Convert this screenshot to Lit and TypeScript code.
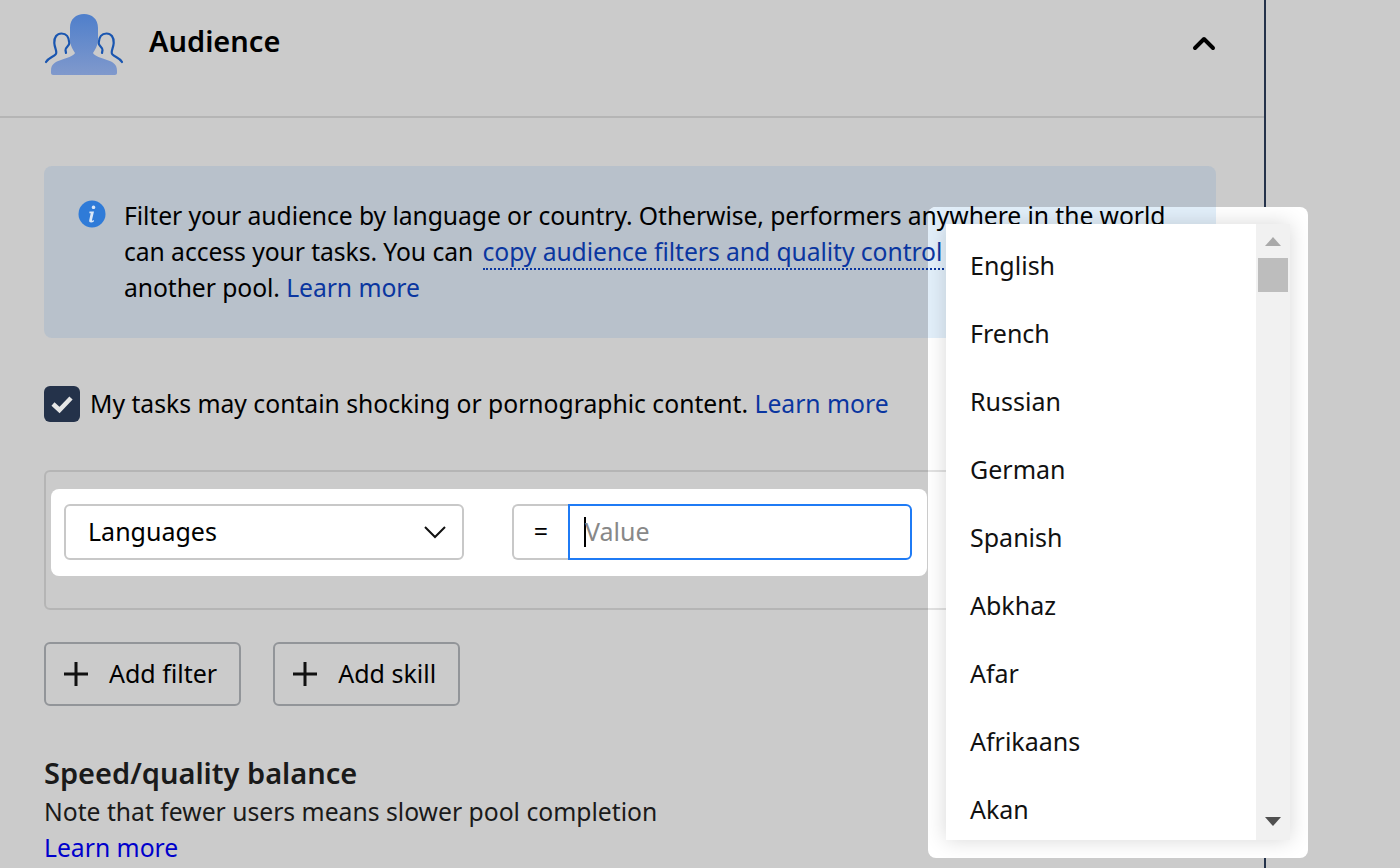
import { LitElement, html, css } from "lit";
import { customElement } from "lit/decorators.js";

const LANGS = ["English", "French", "Russian", "German", "Spanish", "Abkhaz", "Afar", "Afrikaans", "Akan"];

const plus = html`<svg class="plus" viewBox="0 0 24 24" width="24" height="24"><path d="M12 0v24M0 12h24" stroke="#111" stroke-width="3" fill="none"/></svg>`;

@customElement("app-root")
export class AppRoot extends LitElement {
  static styles = css`
    :host {
      display: block;
      width: 1400px;
      height: 868px;
      overflow: hidden;
      position: relative;
      background: #cbcbcb;
      font-family: "Noto Sans", "Open Sans", sans-serif;
      font-size: 24.7px;
      line-height: 36px;
      color: #000;
    }
    .main {
      box-sizing: border-box;
      width: 1266px;
      height: 868px;
      border-right: 2px solid #24324a;
      overflow: hidden;
    }
    .head {
      box-sizing: border-box;
      height: 118px;
      border-bottom: 2px solid #b5b5b5;
      display: flex;
      align-items: flex-start;
      padding: 13px 48px 0 44px;
    }
    .head h2 {
      margin: 10px 0 0 25px;
      font-size: 29px;
      line-height: 36px;
      font-weight: 600;
      flex: 1;
    }
    .chev { margin-top: 22px; }
    .content { padding: 48px 48px 0 44px; }
    .info {
      position: relative;
      box-sizing: border-box;
      height: 172px;
      border-radius: 8px;
      background: #b8c1cb;
      padding: 32px 40px 0 34px;
      display: flex;
      gap: 18px;
    }
    .info-text {
      position: relative;
      z-index: 2;
      letter-spacing: -0.07px;
    }
    .i-ico { flex: none; margin-top: 2px; }
    a { color: #0a36a0; text-decoration: none; }
    a.dot { border-bottom: 2px dotted #0a36a0; margin-left: 3px; }
    .check {
      display: flex;
      align-items: center;
      height: 36px;
      margin-top: 48px;
      gap: 10px;
    }
    .up1 { padding-bottom: 2px; }
    .box {
      width: 36px;
      height: 36px;
      border-radius: 6px;
      background: #24324a;
      display: flex;
      align-items: center;
      justify-content: center;
    }
    .filter {
      position: relative;
      z-index: 2;
      box-sizing: border-box;
      height: 140px;
      margin-top: 48px;
      border: 2px solid rgba(60, 60, 60, 0.15);
      border-radius: 6px;
      padding: 17px 0 0 5px;
    }
    .row {
      box-sizing: border-box;
      width: 876px;
      height: 87px;
      background: #fff;
      border-radius: 8px;
      padding: 15px 15px 0 13px;
      display: flex;
      font-size: 25px;
    }
    .select {
      box-sizing: border-box;
      width: 400px;
      height: 56px;
      border: 2px solid #c8c8c8;
      border-radius: 6px;
      display: flex;
      align-items: center;
      justify-content: space-between;
      padding: 0 15px 0 22px;
    }
    .eq {
      box-sizing: border-box;
      width: 56px;
      height: 56px;
      margin-left: 48px;
      border: 2px solid #c8c8c8;
      border-right: 0;
      border-radius: 6px 0 0 6px;
      display: flex;
      align-items: center;
      justify-content: center;
    }
    .value {
      box-sizing: border-box;
      flex: 1;
      height: 56px;
      border: 2px solid #1f7bf5;
      border-radius: 0 6px 6px 0;
      display: flex;
      align-items: center;
      padding-left: 14px;
      color: #888;
    }
    .caret { width: 2px; height: 30px; background: #000; margin-right: -1px; }
    .btns { display: flex; gap: 32px; margin-top: 32px; }
    .btn {
      box-sizing: border-box;
      height: 64px;
      border: 2px solid #929599;
      border-radius: 6px;
      display: flex;
      align-items: center;
      gap: 21px;
      padding: 0 22px 0 18px;
      font-size: 25px;
    }
    .plus { flex: none; }
    .speed {
      margin: 49px 0 0;
      font-size: 29px;
      line-height: 36px;
      font-weight: 600;
      color: #1a1a1a;
    }
    .note { color: #1a1a1a; margin-top: 3px; }
    .blue { color: #0000cc; }
    .popup {
      position: absolute;
      left: 928px;
      top: 207px;
      width: 380px;
      height: 651px;
      background: #fff;
      border-radius: 8px;
      overflow: hidden;
    }
    .patch {
      position: absolute;
      left: 0;
      top: 0;
      width: 288px;
      height: 131px;
      background: #e2effa;
    }
    .menu {
      position: absolute;
      left: 18px;
      top: 17px;
      width: 344px;
      height: 616px;
      background: #fff;
      box-shadow: 0 0 20px rgba(0, 0, 0, 0.16);
      z-index: 3;
      display: flex;
    }
    .list { flex: 1; padding-top: 7px; overflow: hidden; font-size: 25px; }
    .item {
      height: 68px;
      display: flex;
      align-items: center;
      padding-left: 24px;
      color: #111;
    }
    .bar {
      width: 34px;
      background: #f1f1f1;
      display: flex;
      flex-direction: column;
      align-items: center;
    }
    .up { margin-top: 13px; }
    .thumb { width: 30px; height: 34px; background: #bdbdbd; margin-top: 11px; }
    .down { margin-top: auto; margin-bottom: 14px; }
  `;

  render() {
    return html`
      <div class="main">
        <div class="head">
          <svg width="80" height="64" viewBox="0 0 80 64">
            <defs>
              <linearGradient id="g" x1="0" y1="0" x2="0" y2="1">
                <stop offset="0" stop-color="#4f7fcb" />
                <stop offset="1" stop-color="#8099cc" />
              </linearGradient>
            </defs>
            <path fill="url(#g)" d="M40 1C32 1 26 6 26 15L26 28C26.500 33 29 37 31 40C30 43 22 45 17 47C11 49 7 51 7 58L7 60C7 61 8 62 9 62L71 62C72 62 73 61 73 60L73 58C73 51 69 49 63 47C58 45 50 43 49 40C51 37 53.500 33 54 28L54 15C54 6 48 1 40 1Z" />
            <g fill="none" stroke="#1a56b0" stroke-width="2.200" stroke-linecap="round" stroke-linejoin="round">
              <path d="M2 49C4 45 9 44 11.500 41.500C14 39.500 10.500 35 10.300 30C10 24 13 20.500 17.500 20.500C22 20.500 25 24 25.300 30C25.500 33 21 34.500 21.500 37L22 40" />
              <path d="M78 49C76 45 71 44 68.500 41.500C66 39.500 69.500 35 69.700 30C70 24 67 20.500 62.500 20.500C58 20.500 55 24 54.700 30C54.500 33 59 34.500 58.500 37L58 40" />
            </g>
          </svg>
          <h2>Audience</h2>
          <svg class="chev" width="24" height="16" viewBox="0 0 24 16">
            <path d="M3 13L12 4L21 13" fill="none" stroke="#000" stroke-width="4" stroke-linecap="round" stroke-linejoin="round" />
          </svg>
        </div>
        <div class="content">
          <div class="info">
            <svg class="i-ico" width="28" height="28" viewBox="0 0 28 28">
              <circle cx="14" cy="14" r="13.500" fill="#2f7bd8" />
              <path d="M15.500 5.500a1.800 1.800 0 1 0 .01 0ZM11.500 11.500h4.500l-2 8.500c-.2 1 .8 1 2 0l-.1 1.500c-2 1.500-5.200 1.500-4.700-1.200l1.500-7h-1.400Z" fill="#dbe8f8" />
            </svg>
            <div class="info-text">Filter your audience by language or country. Otherwise, performers anywhere in the world can access your tasks. You can <a class="dot">copy audience filters and quality control settings</a> from another pool. <a>Learn more</a></div>
          </div>
          <div class="check">
            <div class="box">
              <svg width="24" height="20" viewBox="0 0 24 20"><path d="M3 10L9.500 16L21 4" fill="none" stroke="#e6e6e6" stroke-width="4.500" /></svg>
            </div>
            <div>My tasks may contain shocking or pornographic content. <a>Learn more</a></div>
          </div>
          <div class="filter">
            <div class="row">
              <div class="select">
                <span class="up1">Languages</span>
                <svg width="24" height="14" viewBox="0 0 24 14"><path d="M2 2L12 12L22 2" fill="none" stroke="#111" stroke-width="2" /></svg>
              </div>
              <div class="eq"><span class="up1">=</span></div>
              <div class="value"><span class="caret"></span><span class="up1">Value</span></div>
            </div>
          </div>
          <div class="btns">
            <div class="btn">${plus}<span class="up1">Add filter</span></div>
            <div class="btn">${plus}<span class="up1">Add skill</span></div>
          </div>
          <div class="speed">Speed/quality balance</div>
          <div class="note">Note that fewer users means slower pool completion</div>
          <div class="blue">Learn more</div>
        </div>
      </div>
      <div class="popup">
        <div class="patch"></div>
        <div class="menu">
          <div class="list">${LANGS.map((l) => html`<div class="item">${l}</div>`)}</div>
          <div class="bar">
            <svg class="up" width="16" height="10" viewBox="0 0 16 10"><path d="M8 0L16 9H0Z" fill="#a9a9a9" /></svg>
            <div class="thumb"></div>
            <svg class="down" width="16" height="9" viewBox="0 0 16 9"><path d="M0 0H16L8 9Z" fill="#505050" /></svg>
          </div>
        </div>
      </div>
    `;
  }
}
